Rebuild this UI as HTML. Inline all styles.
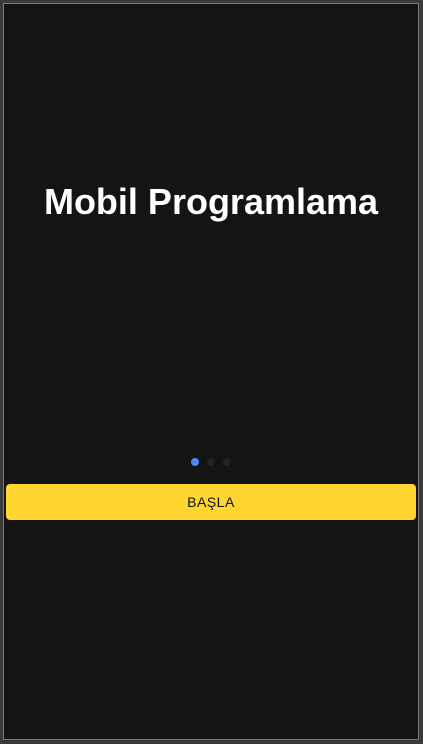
<!DOCTYPE html>
<html><head><meta charset="utf-8"><style>
html,body{margin:0;padding:0;width:423px;height:744px;background:#3a3a3a;overflow:hidden;font-family:"Liberation Sans",Arial,sans-serif}
.frame{position:absolute;left:3px;top:3px;width:414px;height:735px;border:1px solid #7a7a7a;background:#141414}
h1{position:absolute;left:0;right:0;top:177px;margin:0;text-align:center;color:#fff;font-size:36px;font-weight:bold;line-height:42px}
.dot{position:absolute;top:454px;width:8px;height:8px;border-radius:50%;background:#222}
.btn{position:absolute;left:2px;top:480px;width:410px;height:36px;background:#ffd530;border-radius:4px;text-align:center;line-height:36px;font-size:14px;color:#111;letter-spacing:0.5px}
</style></head><body>
<div class="frame">
<h1>Mobil Programlama</h1>
<div class="dot" style="left:187px;background:#4a8af0"></div>
<div class="dot" style="left:203px"></div>
<div class="dot" style="left:219px"></div>
<div class="btn">BAŞLA</div>
</div>
</body></html>
